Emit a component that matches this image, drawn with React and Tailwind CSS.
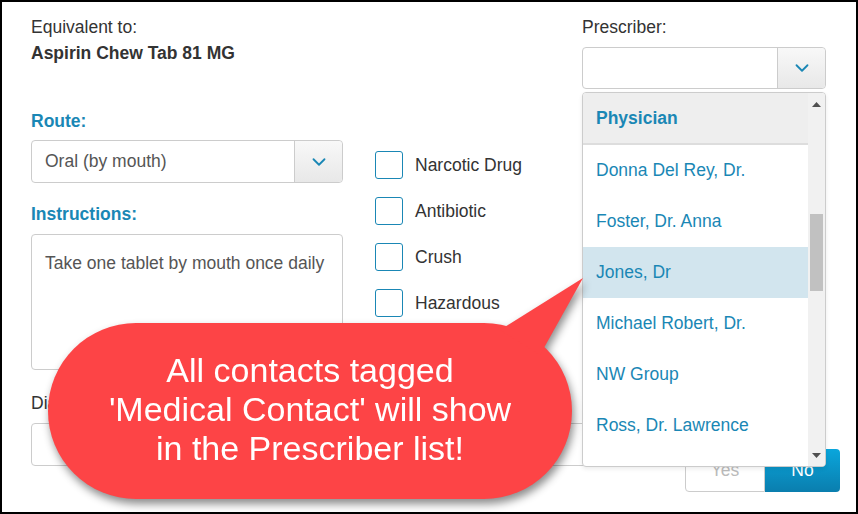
import { ChevronDown } from 'lucide-react';

const Select = ({ value, className = '' }) => (
  <div className={`flex border border-[#cccccc] rounded-[4px] bg-white ${className}`}>
    <div className="flex-1 flex items-center px-[13px] text-[17.5px] text-[#555555]">{value}</div>
    <div className="w-[48px] flex items-center justify-center border-l border-[#cccccc] rounded-r-[4px] bg-gradient-to-b from-[#f8f8f8] to-[#e8e8e8]">
      <ChevronDown size={22} strokeWidth={2} className="text-[#1a87b5]" />
    </div>
  </div>
);

const Check = ({ label }) => (
  <div className="flex items-center h-[28px]">
    <div className="w-[28px] h-[28px] border border-[#1a87b5] rounded-[3px] bg-white" />
    <span className="ml-[12px] text-[17.5px] text-[#333333]">{label}</span>
  </div>
);

const people = [
  'Donna Del Rey, Dr.',
  'Foster, Dr. Anna',
  'Jones, Dr',
  'Michael Robert, Dr.',
  'NW Group',
  'Ross, Dr. Lawrence',
];

export default function App() {
  return (
    <div className="relative w-[858px] h-[514px] border-2 border-black bg-white overflow-hidden font-['Liberation_Sans',Arial,sans-serif] text-[#333333]">
      <div className="flex pl-[29px] pt-[15px]">
        {/* left column */}
        <div className="w-[312px] flex flex-col">
          <div className="text-[17.5px] leading-[20px]">Equivalent to:</div>
          <div className="mt-[6px] text-[17.5px] leading-[20px] font-bold">Aspirin Chew Tab 81 MG</div>
          <div className="mt-[48px] text-[17.5px] leading-[20px] font-bold text-[#1a87b5]">Route:</div>
          <Select value="Oral (by mouth)" className="mt-[9px] h-[43px]" />
          <div className="mt-[21px] text-[17.5px] leading-[20px] font-bold text-[#1a87b5]">Instructions:</div>
          <div className="mt-[10px] h-[136px] border border-[#cccccc] rounded-[4px] px-[13px] pt-[15px] text-[17.5px] text-[#555555]">
            Take one tablet by mouth once daily
          </div>
          <div className="mt-[23px] text-[17.5px] leading-[20px]">Diagnosis:</div>
          <div className="mt-[10px] h-[43px] w-[560px] border border-[#cccccc] rounded-[4px] bg-white" />
        </div>

        {/* checkbox column */}
        <div className="ml-[32px] mt-[134px] flex flex-col gap-[18px]">
          <Check label="Narcotic Drug" />
          <Check label="Antibiotic" />
          <Check label="Crush" />
          <Check label="Hazardous" />
        </div>

        {/* right column */}
        <div className="ml-auto mr-[16px] w-[258px] flex flex-col">
          <div className="text-[17.5px] leading-[20px]">Prescriber:</div>
          <Select value="" className="mt-[10px] h-[42px] w-[244px]" />
          <div className="mt-[360px] flex justify-end">
            <div className="w-[80px] h-[43px] flex items-center justify-center border border-[#cccccc] rounded-l-[4px] bg-white text-[17.5px] text-[#bbbbbb]">Yes</div>
            <div className="w-[75px] h-[43px] flex items-center justify-center rounded-r-[4px] bg-gradient-to-b from-[#0aa6dc] to-[#0a7eae] text-[17.5px] text-white">No</div>
          </div>
        </div>
      </div>

      {/* prescriber dropdown */}
      <div className="absolute left-[580px] top-[90px] w-[244px] h-[375px] flex border border-[#cccccc] rounded-[4px] bg-white overflow-hidden shadow-[0_2px_4px_rgba(0,0,0,0.08)]">
        <div className="flex-1 flex flex-col">
          <div className="h-[52px] flex-none flex items-center px-[13px] bg-[#eeeeee] border-b-2 border-[#dddddd] text-[17.5px] font-bold text-[#1a87b5]">
            Physician
          </div>
          {people.map((p) => (
            <div
              key={p}
              className={`h-[51px] flex-none flex items-center px-[13px] text-[17.5px] text-[#1a87b5] ${p === 'Jones, Dr' ? 'bg-[#d2e5ee]' : ''}`}
            >
              {p}
            </div>
          ))}
        </div>
        <div className="w-[17px] bg-[#f1f1f1] flex flex-col items-center">
          <svg width="9" height="6" viewBox="0 0 9 6" className="mt-[9px]">
            <path d="M0 5 L4.5 0 L9 5 Z" fill="#505050" />
          </svg>
          <div className="mt-[106px] w-[13px] h-[77px] bg-[#c1c1c1]" />
          <svg width="9" height="6" viewBox="0 0 9 6" className="mt-auto mb-[7px]">
            <path d="M0 0 L9 0 L4.5 5 Z" fill="#505050" />
          </svg>
        </div>
      </div>

      {/* callout */}
      <div className="absolute left-[46px] top-[276px] w-[540px] h-[222px] drop-shadow-[2px_5px_4px_rgba(0,0,0,0.45)]">
        <svg width="540" height="90" viewBox="0 0 540 90" className="absolute left-0 top-0">
          <polygon points="452,52 535,0 492,77" fill="#fd4446" />
        </svg>
        <div className="mt-[45px] w-[524px] h-[176px] pb-[3px] rounded-full bg-[#fd4446] flex flex-col items-center justify-center text-white text-[34px] leading-[39px] text-center">
          <div>All contacts tagged</div>
          <div>'Medical Contact' will show</div>
          <div>in the Prescriber list!</div>
        </div>
      </div>
    </div>
  );
}
